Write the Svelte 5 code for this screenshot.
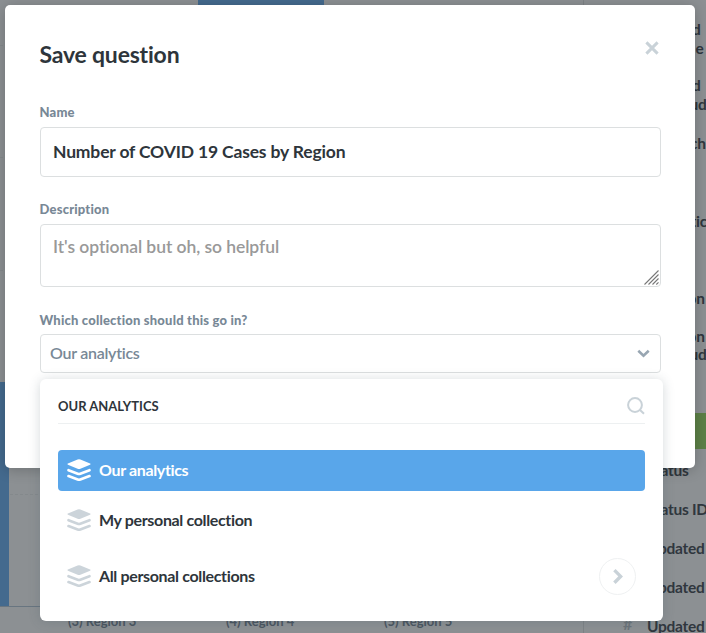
<script>
  const fields = [
    { text: 'd', top: 19, left: 692 },
    { text: 'e', top: 38, left: 695.5 },
    { text: 'd', top: 75, left: 692 },
    { text: 'ud', top: 94, left: 689.5 },
    { text: 'ch', top: 132.5, left: 690 },
    { text: 'tic', top: 210.5, left: 690.5 },
    { text: 'on', top: 288, left: 687.5 },
    { text: 'on', top: 326, left: 687.5 },
    { text: 'ud', top: 344, left: 689.5 },
    { text: 'Status', top: 460, left: 647 },
    { text: 'Status ID', top: 499, left: 647 },
    { text: 'Updated', top: 538, left: 647 },
    { text: 'Updated', top: 576.5, left: 647 },
    { text: 'Updated', top: 615.5, left: 647 }
  ];
  const collections = [
    { name: 'Our analytics', kind: 'selected' },
    { name: 'My personal collection', kind: 'plain' },
    { name: 'All personal collections', kind: 'parent' }
  ];
  const regions = [
    { label: '(3) Region 3', left: 68 },
    { label: '(4) Region 4', left: 226 },
    { label: '(5) Region 5', left: 384 }
  ];
  const gridLines = [45, 157, 270, 494];
</script>

<div class="page">
  <div class="chart">
    {#each gridLines as y}<i class="grid-line" style="top:{y}px"></i>{/each}
    <i class="bar first"></i>
    <i class="bar second"></i>
    <i class="axis"></i>
    {#each regions as r}<span class="region" style="left:{r.left}px">{r.label}</span>{/each}
  </div>
  <i class="side-border"></i>
  <i class="green"></i>
  {#each fields as f}<span class="field-name" style="top:{f.top}px;left:{f.left}px">{f.text}</span>{/each}
  <span class="hash">#</span>

  <section class="modal">
    <header>
      <h1>Save question</h1>
      <svg class="close" width="14" height="14" viewBox="0 0 14 14"><path d="M1.4 1.4 12.6 12.6M12.6 1.4 1.4 12.6" /></svg>
    </header>
    <label class="l-name" for="name">Name</label>
    <input id="name" value="Number of COVID 19 Cases by Region" />
    <label class="l-desc" for="desc">Description</label>
    <div class="area">
      <textarea id="desc" placeholder="It's optional but oh, so helpful"></textarea>
      <svg class="grip" width="15" height="15" viewBox="0 0 15 15"><path d="M.5 14.5 14.5.5M4.5 14.5l10-10M8.5 14.5l6-6M12.3 14.5l2.2-2.2" /></svg>
    </div>
    <span class="label l-coll">Which collection should this go in?</span>
    <div class="select">
      <span>Our analytics</span>
      <svg width="13" height="9" viewBox="0 0 13 9"><path d="M1.3 1.7 6.5 6.6 11.7 1.7" /></svg>
    </div>
  </section>

  <section class="menu">
    <div class="menu-head">
      <span>OUR ANALYTICS</span>
      <svg width="18" height="18" viewBox="0 0 18 18"><circle cx="8" cy="8" r="6.9" /><path d="m13 13 4 3.8" /></svg>
    </div>
    {#each collections as c}
      <div class="item {c.kind}">
        <svg class="stack" width="24" height="23" viewBox="0 0 24 23">
          <path d="M10.6.6q1.4-.6 2.8 0l9.7 3.9q1 .6 0 1.2l-9.7 4q-1.4.6-2.8 0L.9 5.7q-1-.6 0-1.2z" />
          <path class="band" d="m1.5 11.2 9.2 3.5q1.3.5 2.6 0l9.2-3.5M1.5 17l9.2 3.5q1.3.5 2.6 0l9.2-3.5" />
        </svg>
        <span>{c.name}</span>
        {#if c.kind === 'parent'}
          <b class="next"><svg width="12" height="17" viewBox="0 0 12 17"><path d="m2.4 2.1 6.2 6.3-6.2 6.3" /></svg></b>
        {/if}
      </div>
    {/each}
  </section>
</div>

<style>
  :global(body) { overflow: hidden; }
  .page {
    position: relative; width: 706px; height: 633px; overflow: hidden;
    background: #8c9093; font-family: Lato, "Open Sans", sans-serif; color: #2e353b;
    font-variant-ligatures: none;
  }
  .page * { box-sizing: border-box; }
  i, .region, .field-name, .hash { position: absolute; white-space: nowrap; }
  .grid-line { left: 0; width: 583px; border-top: 1px dashed #84898c; }
  .bar { background: #446a8e; }
  .first { left: 0; top: 382px; width: 8.5px; height: 224px; }
  .second { left: 198px; top: 0; width: 126px; height: 606px; }
  .axis { left: 0; top: 606px; width: 583px; height: 1px; background: #687580; }
  .region { top: 612px; font-size: 13px; line-height: 18px; font-weight: 700; color: #4a5560; }
  .side-border { left: 583px; top: 0; width: 1px; height: 633px; background: #7e8386; }
  .green { left: 600px; top: 413px; width: 106px; height: 36px; background: #5d8047; }
  .field-name { font-size: 15.5px; line-height: 20px; font-weight: 700; letter-spacing: -.25px; color: #30373e; }
  .hash { left: 623px; top: 615px; font-size: 16px; line-height: 18px; font-weight: 700; color: #6c747a; }

  .modal {
    position: absolute; left: 5px; top: 5px; width: 690px; height: 463px;
    padding: 0 34px 0 35px; display: flex; flex-direction: column;
    background: #fff; border-radius: 5px; box-shadow: 0 2px 14px rgba(0, 0, 0, .22);
  }
  header { display: flex; justify-content: space-between; height: 98px; padding-top: 34px; }
  h1 { margin: 0 0 0 -.5px; font-size: 23px; line-height: 30px; font-weight: 700; letter-spacing: -.2px; }
  .close { margin: 2px 2px 0 0; fill: none; stroke: #c9d2d8; stroke-width: 3; }
  label, .label { display: block; margin-left: -.5px; font-size: 13px; line-height: 18px; font-weight: 900; letter-spacing: .2px; color: #788896; }
  input, textarea, .select {
    display: block; width: 621px; margin: 0; border: 1px solid #dcdfe0; border-radius: 4px;
    background: #fff; color: #2e353b; font: 700 17.5px/24px Lato, sans-serif; letter-spacing: -.16px; outline: none;
    font-variant-ligatures: none;
  }
  input { height: 50px; margin-top: 6px; padding: 0 13px 1px 12px; }
  .l-desc { margin-top: 23px; }
  .area { position: relative; margin-top: 6px; height: 63px; }
  textarea { height: 63px; padding: 10px 12px; resize: none; overflow: hidden; font-weight: 600; letter-spacing: -.07px; }
  textarea::placeholder { color: #999; opacity: 1; }
  .grip { position: absolute; left: 604px; top: 46px; fill: none; stroke: #777; stroke-width: 1.1; }
  .l-coll { margin-top: 24px; }
  .select {
    display: flex; align-items: center; justify-content: space-between; height: 39px;
    margin-top: 5px; padding: 0 10px 1px 9px; font-size: 16px; font-weight: 600; letter-spacing: -.27px; color: #788896;
  }
  .select svg { fill: none; stroke: #98a6b2; stroke-width: 2.6; }

  .menu {
    position: absolute; left: 40px; top: 379px; width: 623px; height: 242px; padding: 0 18px;
    background: #fff; border-radius: 6px; box-shadow: 0 1px 12px rgba(60, 80, 90, .22);
  }
  .menu-head {
    display: flex; align-items: center; justify-content: space-between; height: 45px;
    margin-bottom: 26px; padding-top: 9px; border-bottom: 1px solid #edf0f1;
    font-size: 13px; font-weight: 700;
  }
  .menu-head svg { fill: none; stroke: #c9d2d8; stroke-width: 2; }
  .item { display: flex; align-items: center; height: 41px; padding: 0 9px; border-radius: 4px; font-size: 16px; font-weight: 700; letter-spacing: -.35px; }
  .item > span { margin: -3px 0 0 8px; }
  .stack { fill: #ccd4da; }
  .band { fill: none; stroke: #ccd4da; stroke-width: 2.6; stroke-linecap: round; }
  .selected { background: #59a6ea; color: #fff; }
  .selected .stack { fill: #fff; }
  .selected .band { stroke: #fff; }
  .plain { margin-top: 9px; }
  .parent { margin-top: 15px; }
  .next { display: grid; place-items: center; width: 37px; height: 37px; margin-left: auto; border: 1px solid #eff1f2; border-radius: 50%; }
  .next svg { fill: none; stroke: #c9d2d8; stroke-width: 3.4; }
</style>
